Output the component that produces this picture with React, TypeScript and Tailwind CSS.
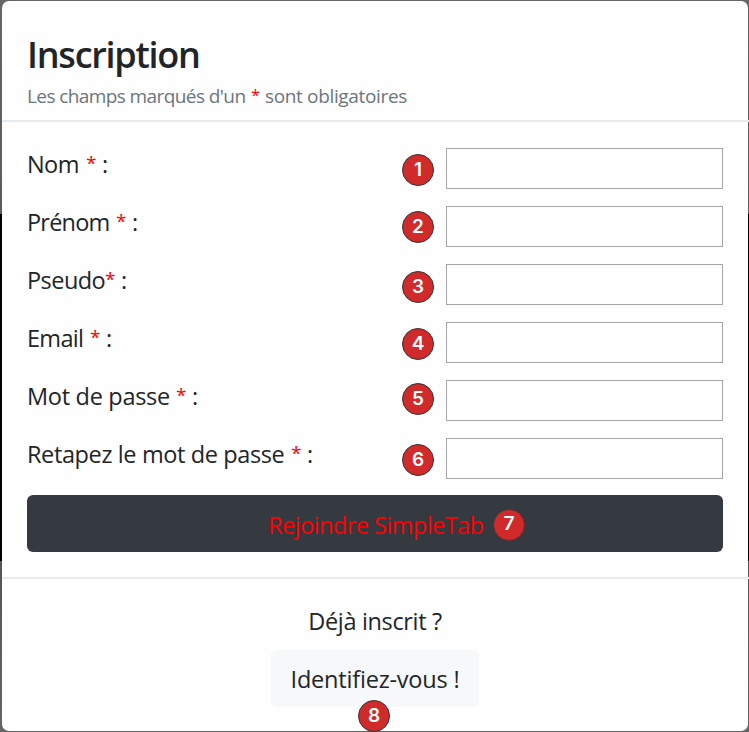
import React from 'react';

type Field = {
  label: string;
  type: string;
  offset: string;
  width: string;
};

const fields: Field[] = [
  { label: 'Nom', type: 'text', offset: 'mt-[6px]', width: 'w-[59px] tracking-[-0.6px]' },
  { label: 'Prénom', type: 'text', offset: 'mt-[5px]', width: 'w-[89px] tracking-[-0.8px]' },
  { label: 'Pseudo', type: 'text', offset: 'mt-[7px]', width: 'w-[78px] tracking-[-0.55px]' },
  { label: 'Email', type: 'email', offset: 'mt-[6px]', width: 'w-[63px] tracking-[-0.7px]' },
  { label: 'Mot de passe', type: 'password', offset: 'mt-[3px]', width: 'w-[149px] tracking-[-0.3px]' },
  { label: 'Retapez le mot de passe', type: 'password', offset: 'mt-[6px]', width: 'w-[264px] tracking-[-0.38px]' },
];

function Badge({ n, className = '' }: { n: number; className?: string }) {
  return (
    <span
      className={`flex h-8 w-8 shrink-0 items-center justify-center rounded-full border pb-[2px] font-['Inter',sans-serif] text-[19px] leading-none font-semibold text-white ${n === 7 ? 'border-[#5a3033]' : 'border-[#3a3436]'} bg-[#d02a2b] ${className}`}
    >
      {n}
    </span>
  );
}

export default function App() {
  return (
    <div className="h-[732px] w-[749px] overflow-hidden bg-[linear-gradient(#666_0,#5c5c5c_214px,#000_214px,#000_561px,#555_561px,#666_100%)] pt-px pl-[2px] font-['Open_Sans',sans-serif] text-[#212529]">
      <div className="flex h-[730px] w-[746px] flex-col rounded-[7px] bg-[#fefefe]">
        <header className="h-[119px] shrink-0 pt-[31px] pl-[25px]">
          <h1 className="text-[36px] leading-[46px] font-semibold tracking-[-1.25px] whitespace-nowrap">Inscription</h1>
          <p className="mt-[4px] flex text-[19px] leading-[29px] whitespace-nowrap text-[#6c757d]">
            <span className="w-[224px] tracking-[-0.59px]">Les champs marqués d'un</span>
            <span className="w-[14px] text-[16px] leading-[27px] text-[#f00]">*</span>
            <span className="tracking-[-0.35px]">sont obligatoires</span>
          </p>
        </header>
        <hr className="h-[2px] w-[747px] shrink-0 border-0 bg-[#e7eaed]" />
        <form className="px-[25px] pt-[26px]" onSubmit={(e) => e.preventDefault()}>
          {fields.map((f, i) => (
            <div key={f.label} className="flex h-[58px] items-start">
              <label className="flex w-[375px] text-[23.5px] leading-[33px] whitespace-nowrap">
                <span className={f.width}>{f.label}</span>
                <span className="w-[16px] text-[19px] leading-[31px] text-[#f00]">*</span>
                <span>:</span>
              </label>
              <Badge n={i + 1} className={f.offset} />
              <input type={f.type} className="ml-3 h-[41px] w-[277px] border border-[#a6a6a6] bg-[#fefefe] px-2" />
            </div>
          ))}
          <button className="-mt-px flex h-[57px] w-[696px] items-center rounded-[6px] bg-[#343a40] pl-[241px] text-[23.5px] text-[#f00]">
            <span className="w-[225px] pt-[4px] text-left tracking-[-0.55px] whitespace-nowrap">Rejoindre SimpleTab</span>
            <Badge n={7} className="mt-[2px]" />
          </button>
        </form>
        <hr className="mt-[25px] h-[2px] w-[747px] shrink-0 border-0 bg-[#e7eaed]" />
        <footer className="flex flex-col items-center pt-[25px] text-[23.5px] leading-[35px]">
          <p className="tracking-[-0.35px]">Déjà inscrit ?</p>
          <div className="relative mt-[11px]">
            <button className="h-[57px] w-[208px] rounded-[6px] bg-[#f7f8fa] pt-px tracking-[-0.2px] whitespace-nowrap">
              Identifiez-vous !
            </button>
            <Badge n={8} className="absolute top-[50px] left-[87px]" />
          </div>
        </footer>
      </div>
    </div>
  );
}
